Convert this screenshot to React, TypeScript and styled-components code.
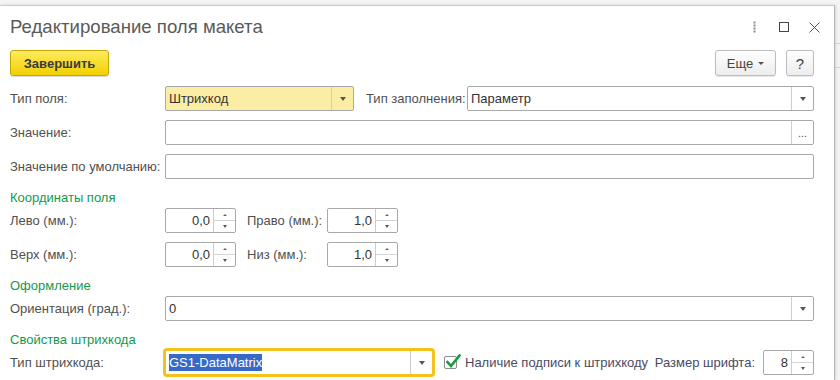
import React from "react";
import styled, { createGlobalStyle } from "styled-components";

const GlobalStyle = createGlobalStyle`
  html, body {
    margin: 0;
    padding: 0;
  }
  body {
    background: #f4f4f4;
    font-family: "Liberation Sans", Arial, sans-serif;
    font-size: 13px;
    color: #505050;
  }
`;

const Page = styled.div`
  display: flex;
  height: 380px;
  overflow: hidden;
`;

const Window = styled.div`
  box-sizing: border-box;
  width: 835px;
  flex: none;
  margin-top: 5px;
  background: #fff;
  border-top: 1px solid #c9c9c9;
  border-right: 1px solid #b5b5b5;
  padding: 0 20px 0 10px;
  box-shadow: 1px 0 3px rgba(0, 0, 0, 0.12);
`;

const Side = styled.div`
  flex: 1;
  padding-top: 43px;
`;

const SideLine = styled.div<{ $gap?: number }>`
  height: 1px;
  background: #cfcfcf;
  margin-top: ${(p) => p.$gap ?? 0}px;
`;

const TitleBar = styled.div`
  box-sizing: border-box;
  height: 44px;
  padding-bottom: 2px;
  display: flex;
  align-items: center;
`;

const Title = styled.div`
  flex: 1;
  font-size: 18.6px;
  color: #5a5a5a;
`;

const TitleTools = styled.div`
  display: flex;
  margin-right: -15px;
`;

const ToolButton = styled.div`
  width: 30px;
  height: 20px;
  display: flex;
  align-items: center;
  justify-content: center;
`;

const CommandBar = styled.div`
  height: 26px;
  display: flex;
  gap: 10px;
`;

const MainButton = styled.div`
  box-sizing: border-box;
  width: 99px;
  display: flex;
  align-items: center;
  justify-content: center;
  font-weight: bold;
  color: #3a3a3a;
  background: linear-gradient(#fdeb5f, #f3d000);
  border: 1px solid #c9a700;
  border-radius: 3px;
  box-shadow: 0 1px 1px rgba(0, 0, 0, 0.15);
`;

const Spacer = styled.div`
  flex: 1;
`;

const PlainButton = styled.div<{ $w: number; $big?: boolean }>`
  box-sizing: border-box;
  width: ${(p) => p.$w}px;
  display: flex;
  align-items: center;
  justify-content: center;
  gap: 5px;
  color: #444;
  font-size: ${(p) => (p.$big ? 15 : 13)}px;
  background: linear-gradient(#ffffff, #ededed);
  border: 1px solid #bcbcbc;
  border-radius: 3px;
  box-shadow: 0 1px 1px rgba(0, 0, 0, 0.1);
`;

const Form = styled.div`
  margin-top: 10px;
`;

const Row = styled.div`
  height: 25px;
  margin-bottom: 9px;
  display: flex;
  align-items: center;
`;

const Label = styled.div<{ $w?: number; $ml?: number }>`
  flex: none;
  width: ${(p) => p.$w ?? 155}px;
  margin-left: ${(p) => p.$ml ?? 0}px;
  white-space: nowrap;
  color: #505050;
`;

const Section = styled.div`
  height: 20px;
  line-height: 20px;
  color: #14994b;
`;

const Field = styled.div<{ $w?: number; $bg?: string; $focus?: boolean }>`
  box-sizing: border-box;
  height: 25px;
  display: flex;
  flex: ${(p) => (p.$w ? "none" : "1")};
  width: ${(p) => (p.$w ? `${p.$w}px` : "auto")};
  background: ${(p) => p.$bg ?? "#fff"};
  border: 1px solid ${(p) => (p.$focus ? "#f4c21a" : "#a9a9a9")};
  border-radius: 2px;
  box-shadow: ${(p) => (p.$focus ? "0 0 0 2px #f4c21a" : "none")};
`;

const Value = styled.div<{ $right?: boolean }>`
  flex: 1;
  padding: 0 3px;
  line-height: 23px;
  color: #333;
  white-space: nowrap;
  overflow: hidden;
  text-align: ${(p) => (p.$right ? "right" : "left")};
`;

const Selected = styled.span`
  background: #3769c9;
  color: #fff;
  padding: 1px 0;
`;

const SideButton = styled.div`
  width: 21px;
  flex: none;
  border-left: 1px solid #cdcdcd;
  display: flex;
  align-items: center;
  justify-content: center;
  font-size: 11px;
  color: #555;
`;

const SpinBox = styled.div`
  width: 21px;
  flex: none;
  border-left: 1px solid #cdcdcd;
  display: flex;
  flex-direction: column;
`;

const SpinHalf = styled.div<{ $top?: boolean }>`
  flex: 1;
  display: flex;
  align-items: center;
  justify-content: center;
  border-top: ${(p) => (p.$top ? "none" : "1px solid #d6d6d6")};
`;

const Arrow = styled.div<{ $up?: boolean; $size?: number }>`
  width: 0;
  height: 0;
  border-left: ${(p) => p.$size ?? 3}px solid transparent;
  border-right: ${(p) => p.$size ?? 3}px solid transparent;
  ${(p) =>
    p.$up
      ? `border-bottom: ${(p.$size ?? 3) - 0.5}px solid #666;`
      : `border-top: ${(p.$size ?? 3) + 0.5}px solid #555;`}
`;

const CheckWrap = styled.div`
  position: relative;
  flex: none;
  width: 13px;
  height: 13px;
  margin-left: 11px;
  box-sizing: border-box;
  border: 1px solid #8d8d8d;
  border-radius: 2px;
  background: #fff;

  svg {
    position: absolute;
    left: 0;
    top: -3px;
  }
`;

const CheckLabel = styled.div`
  margin-left: 8px;
  white-space: nowrap;
  color: #4b4a62;
`;

const SizeLabel = styled.div`
  margin-left: auto;
  margin-right: 8px;
  white-space: nowrap;
  color: #4b4a62;
`;

const Combo = ({
  value,
  w,
  bg,
  focus,
  selected,
}: {
  value: string;
  w?: number;
  bg?: string;
  focus?: boolean;
  selected?: boolean;
}) => (
  <Field $w={w} $bg={bg} $focus={focus}>
    <Value>{selected ? <Selected>{value}</Selected> : value}</Value>
    <SideButton>
      <Arrow $size={3.5} />
    </SideButton>
  </Field>
);

const Spinner = ({ value, w = 71 }: { value: string; w?: number }) => (
  <Field $w={w}>
    <Value $right>{value}</Value>
    <SpinBox>
      <SpinHalf $top>
        <Arrow $up $size={2.5} />
      </SpinHalf>
      <SpinHalf>
        <Arrow $size={2.5} />
      </SpinHalf>
    </SpinBox>
  </Field>
);

const DotsIcon = () => (
  <svg width="3" height="12" viewBox="0 0 3 12">
    {[0, 3, 6, 9].map((y) => (
      <rect key={y} x="0.5" y={y + 0.5} width="2" height="2" fill="#8a8a8a" />
    ))}
  </svg>
);

const App = () => {
  return (
    <Page>
      <GlobalStyle />
      <Window>
        <TitleBar>
          <Title>Редактирование поля макета</Title>
          <TitleTools>
            <ToolButton>
              <DotsIcon />
            </ToolButton>
            <ToolButton>
              <svg width="10" height="10" viewBox="0 0 10 10">
                <rect x="0.5" y="0.5" width="9" height="9" fill="none" stroke="#444" />
              </svg>
            </ToolButton>
            <ToolButton>
              <svg width="11" height="11" viewBox="0 0 11 11">
                <path d="M0.5 0.5 L10.5 10.5 M10.5 0.5 L0.5 10.5" stroke="#555" strokeWidth="1" />
              </svg>
            </ToolButton>
          </TitleTools>
        </TitleBar>

        <CommandBar>
          <MainButton>Завершить</MainButton>
          <Spacer />
          <PlainButton $w={61}>
            Еще
            <Arrow $size={3} />
          </PlainButton>
          <PlainButton $w={28} $big>
            ?
          </PlainButton>
        </CommandBar>

        <Form>
          <Row>
            <Label>Тип поля:</Label>
            <Combo value="Штрихкод" w={189} bg="#fbeda3" />
            <Label $w={101} $ml={12}>
              Тип заполнения:
            </Label>
            <Combo value="Параметр" />
          </Row>
          <Row>
            <Label>Значение:</Label>
            <Field>
              <Value />
              <SideButton>...</SideButton>
            </Field>
          </Row>
          <Row>
            <Label>Значение по умолчанию:</Label>
            <Field>
              <Value />
            </Field>
          </Row>

          <Section>Координаты поля</Section>
          <Row>
            <Label>Лево (мм.):</Label>
            <Spinner value="0,0" />
            <Label $w={80} $ml={11}>
              Право (мм.):
            </Label>
            <Spinner value="1,0" />
          </Row>
          <Row>
            <Label>Верх (мм.):</Label>
            <Spinner value="0,0" />
            <Label $w={80} $ml={11}>
              Низ (мм.):
            </Label>
            <Spinner value="1,0" />
          </Row>

          <Section>Оформление</Section>
          <Row>
            <Label>Ориентация (град.):</Label>
            <Combo value="0" />
          </Row>

          <Section>Свойства штрихкода</Section>
          <Row>
            <Label>Тип штрихкода:</Label>
            <Combo value="GS1-DataMatrix" w={268} focus selected />
            <CheckWrap>
              <svg width="16" height="15" viewBox="0 0 16 15">
                <path
                  d="M2.5 8 L6 12 L14.5 1.5"
                  fill="none"
                  stroke="#1e9a3e"
                  strokeWidth="2.6"
                  strokeLinecap="square"
                />
              </svg>
            </CheckWrap>
            <CheckLabel>Наличие подписи к штрихкоду</CheckLabel>
            <SizeLabel>Размер шрифта:</SizeLabel>
            <Spinner value="8" w={51} />
          </Row>
        </Form>
      </Window>
      <Side>
        <SideLine />
        <SideLine $gap={23} />
      </Side>
    </Page>
  );
};

export default App;
